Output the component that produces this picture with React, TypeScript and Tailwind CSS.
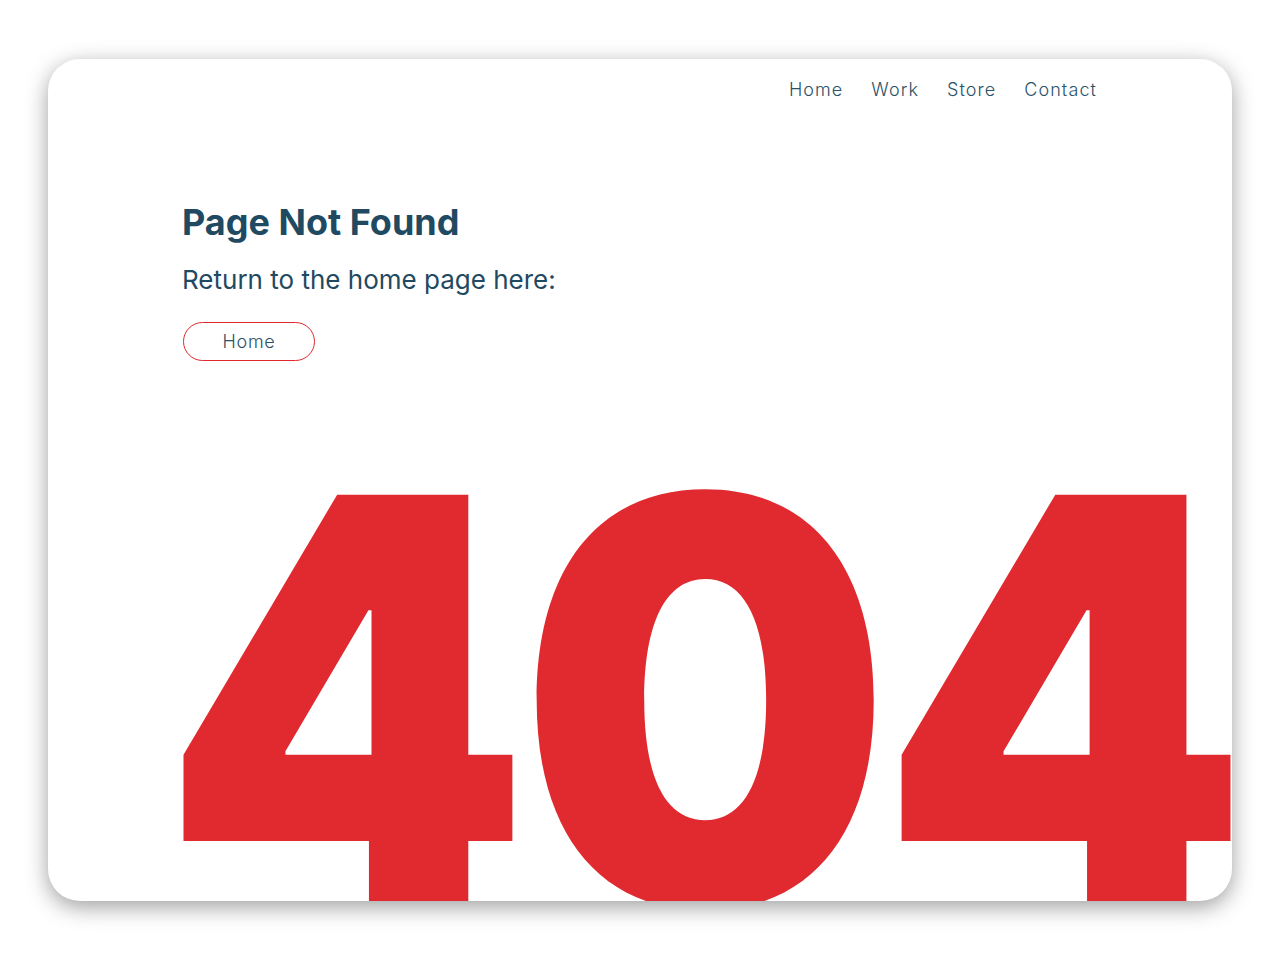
const links = ['Home', 'Work', 'Store', 'Contact']

const App = () => {
    return (
        <div className="min-h-screen w-full bg-white pt-[59px] px-12" style={{ fontFamily: 'Inter, "Noto Sans", sans-serif' }}>
            <div className="relative h-[842px] w-[1184px] overflow-hidden rounded-[32px] bg-white shadow-[0_6px_22px_rgba(0,0,0,0.38)]">
                <nav className="flex justify-end gap-7 pr-[135px] pt-[19px]">
                    {links.map(link =>
                        <a key={link} href="#" className="text-[18px] font-light leading-6 tracking-[0.06em] text-[#2b5268]">
                            {link}
                        </a>
                    )}
                </nav>

                <div className="pl-[134px] pt-[98px]">
                    <h1 className="text-[36px] font-bold leading-[44px] text-[#1f4a62]">Page Not Found</h1>
                    <p className="mt-[20px] text-[26px] leading-8 text-[#1f4a62]">Return to the home page here:</p>
                    <button className="mt-[26px] ml-px h-[39px] w-[132px] rounded-full border border-[#e0292e] text-[18px] font-light tracking-[0.04em] text-[#2b5268]">
                        Home
                    </button>

                    <div className="mt-[57px] -ml-[20px] origin-left scale-x-[0.93] whitespace-nowrap text-[564px] font-black leading-none tracking-[-0.022em] text-[#e02a2f]">
                        404
                    </div>
                </div>
            </div>
        </div>
    )
}

export default App
